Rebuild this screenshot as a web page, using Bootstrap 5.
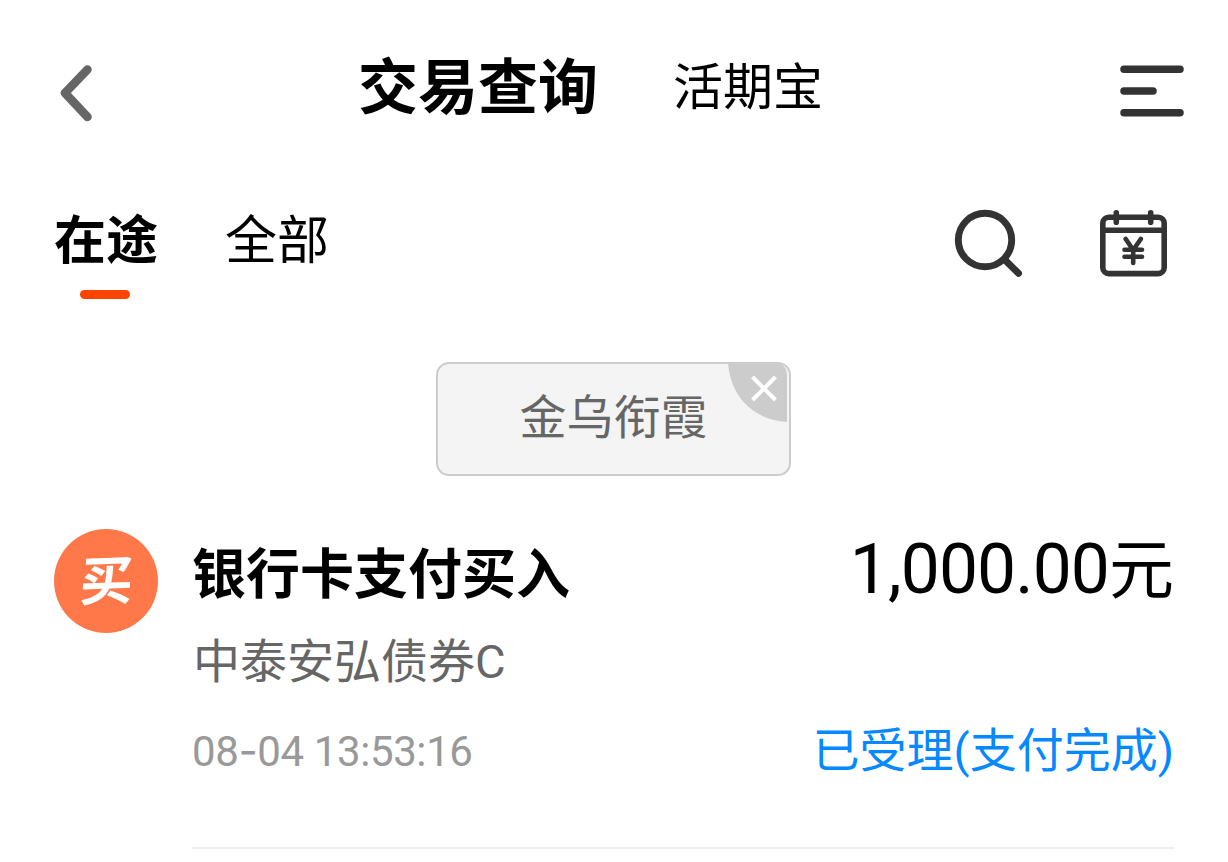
<!DOCTYPE html>
<html lang="zh-CN">

<head>
    <meta charset="UTF-8">
    <meta name="viewport" content="width=device-width, initial-scale=1.0">
    <title>交易查询</title>
    <link href="https://cdn.jsdelivr.net/npm/bootstrap@5.3.0/dist/css/bootstrap.min.css" rel="stylesheet">
    <style>
        body {
            background-color: #fff;
            color: #000;
            font-family: "Noto Sans CJK SC", sans-serif;
            overflow: hidden;
        }
        svg {
            display: block;
            flex: none;
        }
        .page-header {
            height: 172px;
            padding: 0 43px 0 59px;
        }
        .page-title {
            font-size: 60px;
            line-height: 80px;
            margin: 43px 0 0 266px;
        }
        .page-link-alt {
            font-size: 50px;
            line-height: 80px;
            margin: 43px 0 0 75px;
        }
        .tab-bar {
            height: 190px;
            padding: 0 60px 0 54px;
        }
        .tab-item {
            font-size: 52px;
            line-height: 70px;
            margin-top: 30px;
        }
        .tab-item.active::after {
            content: "";
            display: block;
            width: 50px;
            height: 9px;
            margin: 18px 0 0 26px;
            border-radius: 5px;
            background-color: #ff4400;
        }
        .tab-gap {
            margin-right: 67px;
        }
        .filter-tag {
            width: 355px;
            height: 114px;
            margin-left: 436px;
            border: 2px solid #ccc;
            border-radius: 13px;
            background-color: #f4f4f4;
            color: #666;
            font-size: 47px;
            line-height: 100px;
        }
        .filter-close {
            top: -2px;
            right: 1px;
        }
        .record {
            margin: 53px 54px 0 54px;
        }
        .buy-icon {
            flex: none;
            width: 104px;
            height: 104px;
            background-color: #ff7849;
            color: #fff;
            font-size: 53px;
            line-height: 96px;
        }
        .buy-icon span {
            display: inline-block;
            transform: skewX(-4deg) rotate(-2deg);
        }
        .record-body {
            margin-left: 34px;
            height: 320px;
            border-bottom: 2px solid #eee;
        }
        .record-title {
            font-size: 54px;
            line-height: 84px;
        }
        .record-amount {
            font-family: Roboto, "Noto Sans CJK SC", sans-serif;
            font-size: 69.5px;
            line-height: 84px;
            letter-spacing: -0.9px;
            margin-top: -1px;
        }
        .record-amount span {
            font-size: 65px;
            letter-spacing: 0;
        }
        .fund-name {
            font-family: Roboto, "Noto Sans CJK SC", sans-serif;
            font-size: 47px;
            line-height: 70px;
            color: #666;
            margin: 14px 0 0 1px;
        }
        .record-foot {
            margin-top: 24px;
        }
        .record-time {
            font-family: Roboto, sans-serif;
            font-size: 42px;
            line-height: 60px;
            letter-spacing: -0.4px;
            color: #999;
        }
        .record-time span {
            font-family: Inter, sans-serif;
        }
        .record-status {
            font-family: Roboto, "Noto Sans CJK SC", sans-serif;
            font-size: 47px;
            line-height: 60px;
            color: #0589ff;
        }
    </style>
</head>

<body>
<header class="page-header d-flex align-items-start">
    <svg class="mt-5" width="33" height="74" viewBox="59 48 33 74" fill="none" stroke="#666" stroke-width="8.500" stroke-linecap="round" stroke-linejoin="round">
        <path d="M87.500 69.500 L65 93 L87.500 117"/>
    </svg>
    <h1 class="page-title fw-bold mb-0">交易查询</h1>
    <div class="page-link-alt">活期宝</div>
    <svg class="mt-5 ms-auto" width="66" height="74" viewBox="1119 48 66 74" stroke="#333" stroke-width="7.500" stroke-linecap="round">
        <path d="M1124 69.300H1180M1124 91H1153M1124 112.700H1180"/>
    </svg>
</header>

<nav class="tab-bar d-flex align-items-start">
    <div class="tab-item tab-gap active fw-bold">在途</div>
    <div class="tab-item">全部</div>
    <svg class="ms-auto" width="70" height="110" viewBox="954 172 70 110" fill="none" stroke="#333" stroke-linecap="round">
        <circle cx="985" cy="240" r="26.700" stroke-width="6.900"/>
        <path d="M1005 260L1018.500 273.300" stroke-width="7"/>
    </svg>
    <svg width="144" height="110" viewBox="1024 172 144 110" fill="none" stroke="#333" stroke-width="5.600" stroke-linecap="round" stroke-linejoin="round">
        <rect x="1102.800" y="217.300" width="61.400" height="56.300" rx="6"/>
        <path d="M1103 230.300H1164" stroke-width="5.400"/>
        <path d="M1116.300 212.800V222.200M1150.700 212.800V222.200"/>
        <path d="M1125.700 239L1133.200 250L1140.800 239M1133.200 250V263M1124.500 249.800H1142M1124.500 256.700H1142" stroke-width="4.600"/>
    </svg>
</nav>

<div class="filter-tag position-relative text-center">
    金乌衔霞
    <svg class="filter-close position-absolute" width="60" height="60" viewBox="0 0 60 60">
        <path d="M0 0H48Q59 2 59 13V60C26 58 2 35 0 0Z" fill="#ccc"/>
        <path d="M24.500 15L47.500 38M47.500 15L24.500 38" stroke="#fff" stroke-width="4"/>
    </svg>
</div>

<main class="record d-flex">
    <div class="buy-icon rounded-circle text-center fw-bold"><span>买</span></div>
    <div class="record-body flex-grow-1">
        <div class="d-flex justify-content-between">
            <div class="record-title fw-bold">银行卡支付买入</div>
            <div class="record-amount">1,000.00<span>元</span></div>
        </div>
        <div class="fund-name">中泰安弘债券C</div>
        <div class="record-foot d-flex justify-content-between">
            <div class="record-time">08<span>-</span>04 13:53:16</div>
            <div class="record-status">已受理(支付完成)</div>
        </div>
    </div>
</main>
<script src="https://cdn.jsdelivr.net/npm/bootstrap@5.3.0/dist/js/bootstrap.bundle.min.js"></script>
</body>

</html>
